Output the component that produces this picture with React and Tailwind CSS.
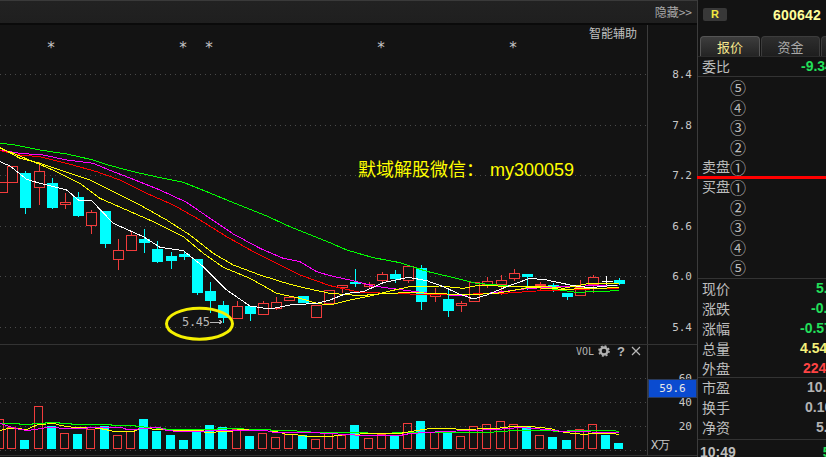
import React from "react";

const z1 = (x) => x / 3;
const z2 = (x) => 330 + x / 3;
const py = (y) => 130 + y / 3;
const vy = (y) => 340 + y / 3;

// [centerX(zoom), type, bodyTop, bodyBottom, wickTop, wickBottom]
const candlesA = [
  [5, "r", 157, 187, 157, 187], [37, "r", 108, 155, 108, 155], [76, "c", 129, 233, 123, 251], [118, "r", 124, 172, 95, 224],
  [157, "c", 159, 233, 145, 236], [196, "r", 216, 223, 190, 236], [235, "c", 202, 260, 186, 262], [274, "r", 247, 287, 240, 311],
  [316, "c", 244, 344, 244, 353], [355, "r", 361, 388, 327, 419], [394, "r", 316, 361, 307, 361], [433, "c", 327, 339, 297, 368],
  [472, "c", 357, 395, 333, 399], [514, "c", 378, 392, 365, 416], [553, "c", 372, 381, 365, 389], [592, "c", 387, 488, 387, 494],
  [631, "c", 484, 515, 457, 550], [670, "c", 526, 566, 514, 578], [712, "r", 529, 566, 514, 566], [751, "c", 529, 554, 529, 572],
  [790, "r", 520, 553, 514, 556], [829, "r", 517, 536, 502, 540], [868, "r", 502, 511, 502, 514], [910, "c", 499, 520, 499, 520],
  [949, "r", 526, 562, 526, 562], [988, "r", 480, 520, 480, 522],
];
const candlesB = [
  [37, "r", 466, 472, 466, 490], [76, "c", 457, 464, 417, 470], [118, "r", 463, 469, 457, 475], [157, "r", 433, 451, 427, 460],
  [196, "c", 432, 446, 420, 460], [235, "r", 408, 451, 408, 458], [274, "c", 414, 515, 405, 540], [316, "r", 490, 500, 475, 515],
  [355, "c", 507, 542, 480, 560], [394, "r", 520, 526, 514, 545], [433, "r", 457, 514, 457, 515], [472, "r", 454, 463, 442, 475],
  [514, "r", 451, 464, 436, 495], [553, "r", 430, 445, 418, 452], [592, "c", 432, 441, 432, 480], [631, "r", 463, 467, 457, 484],
  [670, "c", 465, 471, 460, 487], [712, "c", 489, 500, 489, 509], [751, "r", 470, 493, 451, 493], [790, "r", 442, 463, 436, 490],
  [829, "w", 452, 452, 438, 465], [868, "c", 450, 461, 445, 465],
];

const priceLines = [
  ["#00ff00", [[0,40],[40,44],[120,60],[200,72],[280,90],[320,104],[400,125],[480,143],[550,157],[620,185],[700,218],[800,258],[870,290],[950,322],[990,338]],
    [[50,360],[130,383],[210,398],[290,424],[380,445],[440,460],[500,465],[570,470],[650,475],[740,487],[866,482]]],
  ["#ff00ff", [[0,60],[60,70],[130,75],[200,90],[280,100],[340,125],[400,148],[480,180],[560,217],[630,265],[700,312],[780,355],[850,385],[900,395],[950,425],[990,437]],
    [[60,450],[130,468],[220,480],[300,490],[380,497],[440,493],[500,487],[600,475],[700,470],[866,465]]],
  ["#ff0000", [[0,62],[60,75],[120,80],[200,100],[290,125],[360,150],[440,190],[520,225],[600,270],[680,320],[760,365],[830,400],[900,435],[990,467]],
    [[90,487],[180,490],[270,493],[350,495],[430,492],[520,490],[620,483],[740,478],[866,475]]],
  ["#ffff00", [[0,52],[60,85],[120,100],[200,127],[270,150],[340,185],[420,225],[500,270],[570,315],[640,370],[700,405],[780,435],[860,460],[920,475],[990,490]],
    [[90,497],[170,490],[240,488],[320,490],[400,495],[500,490],[600,472],[700,478],[866,473]]],
  ["#ffff00", [[0,55],[40,70],[100,95],[170,125],[240,160],[300,205],[380,240],[460,275],[550,320],[610,370],[670,412],[750,445],[830,490],[900,505],[950,520],[990,525]],
    [[60,510],[120,498],[180,483],[240,470],[330,468],[400,475],[450,465],[540,470],[640,468],[700,475],[780,460],[866,460]]],
  ["#ffffff", [[0,95],[30,108],[80,148],[120,160],[200,180],[235,210],[275,212],[340,280],[430,320],[480,352],[550,362],[610,410],[680,480],[750,528],[810,537],[870,525],[950,520],[990,510]],
    [[50,490],[100,485],[160,458],[235,442],[290,452],[340,470],[390,493],[430,507],[470,495],[530,470],[600,445],[650,450],[730,467],[780,473],[860,465]]],
];

const barsA = [[-3,"r",237],[34,"r",262],[73,"c",300],[115,"r",199],[154,"c",258],[193,"r",280],[232,"c",282],[271,"r",267],[313,"c",258],[352,"r",286],[391,"r",273],[430,"c",237],[469,"c",273],[511,"c",285],[550,"c",300],[589,"c",267],[628,"c",255],[667,"c",261],[709,"r",267],[748,"c",288],[787,"r",280],[826,"r",292],[865,"r",282],[907,"c",285],[946,"r",298],[985,"r",280]];
const barsB = [[34,"r",285],[73,"c",255],[115,"r",295],[154,"r",282],[193,"c",285],[232,"r",250],[271,"c",243],[313,"r",277],[352,"c",273],[391,"r",289],[430,"r",259],[469,"r",253],[511,"r",244],[550,"r",253],[589,"c",261],[628,"r",286],[667,"c",291],[709,"c",300],[748,"r",268],[787,"r",253],[826,"c",285],[865,"c",309]];

const volLines = [
  ["#00ff00", [[0,250],[57,250],[60,253],[96,253],[99,250],[135,250],[138,247],[177,247],[178,250],[215,250],[216,253],[335,253],[336,256],[405,256],[408,259],[425,259],[440,262],[495,265],[498,268],[650,268],[655,265],[730,265],[732,268],[810,268],[812,271],[890,271],[893,274],[930,274],[932,277],[990,277]],
    [[100,277],[130,280],[240,277],[490,277],[495,274],[575,271],[650,270],[690,272],[735,270],[850,271],[866,274]]],
  ["#ffff00", [[0,271],[25,265],[50,265],[80,268],[100,258],[115,253],[165,250],[180,256],[225,262],[270,260],[300,265],[330,271],[340,274],[400,274],[420,265],[490,268],[505,271],[610,271],[615,277],[640,277],[655,274],[690,274],[720,268],[830,274],[860,283],[890,283],[900,286],[930,289],[990,289]],
    [[50,283],[130,280],[210,280],[225,275],[280,268],[305,265],[375,265],[380,268],[500,265],[545,259],[600,257],[660,265],[690,274],[730,280],[770,283],[780,280],[850,280],[866,283]]],
  ["#ff00ff", [[0,250],[20,256],[45,265],[80,270],[105,266],[140,262],[175,262],[180,265],[260,265],[265,262],[365,262],[380,268],[410,268],[420,265],[480,262],[500,270],[540,274],[610,274],[620,271],[800,271],[820,277],[930,277],[990,280]],
    [[100,284],[210,284],[240,278],[340,272],[500,268],[570,262],[650,268],[700,272],[866,277]]],
];

const RED = "#f23c3c";
const CYAN = "#00ffff";

function Candle({ x, type, t, b, wt, wb }) {
  const cx = Math.round(x) + 0.5;
  if (type === "w") {
    return (
      <g stroke="#ffffff" shapeRendering="crispEdges">
        <line x1={cx} x2={cx} y1={wt} y2={wb} />
        <line x1={cx - 5} x2={cx + 6} y1={Math.round(t) + 0.5} y2={Math.round(t) + 0.5} />
      </g>
    );
  }
  const top = Math.round(t);
  const h = Math.max(1, Math.round(b - t));
  if (type === "c") {
    return (
      <g shapeRendering="crispEdges">
        <line x1={cx} x2={cx} y1={wt} y2={wb} stroke={CYAN} />
        <rect x={cx - 5.5} y={top} width={11} height={h} fill={CYAN} />
      </g>
    );
  }
  return (
    <g shapeRendering="crispEdges" stroke={RED}>
      <line x1={cx} x2={cx} y1={wt} y2={top} />
      <line x1={cx} x2={cx} y1={top + h} y2={wb} />
      <rect x={cx - 5} y={top + 0.5} width={10} height={h} fill="#131313" />
    </g>
  );
}

const grid = (y) => (
  <line key={y} x1="0" x2="647" y1={y + 0.5} y2={y + 0.5} stroke="#4a4a4a" strokeDasharray="1 4" shapeRendering="crispEdges" />
);

const snap = (v) => Math.round(v) + 0.5;

function PriceChart() {
  const pts = (a, b) =>
    a.map(([x, y]) => `${z1(x)},${py(y)}`).concat(b.map(([x, y]) => `${z2(x)},${py(y)}`)).join(" ");
  return (
    <svg width="647" height="319" viewBox="0 25 647 319" className="block">
      {[74, 125, 175, 226, 276, 327].map(grid)}
      {candlesA.map((c, i) => (
        <Candle key={i} x={z1(c[0])} type={c[1]} t={py(c[2])} b={py(c[3])} wt={py(c[4])} wb={py(c[5])} />
      ))}
      {candlesB.map((c, i) => (
        <Candle key={i} x={z2(c[0])} type={c[1]} t={py(c[2])} b={py(c[3])} wt={py(c[4])} wb={py(c[5])} />
      ))}
      {priceLines.map(([color, a, b], i) => (
        <polyline key={i} points={pts(a, b)} fill="none" stroke={color} strokeWidth="1" shapeRendering="crispEdges" />
      ))}
      {[51, 183, 209, 381, 513].map((x) => (
        <text key={x} x={x} y="53" textAnchor="middle" fill="#c4c4c4" fontSize="15" fontFamily="'DejaVu Sans Mono', monospace">*</text>
      ))}
      <text x="589" y="38" fill="#c0c0c0" fontSize="12" fontFamily="'Noto Sans CJK SC', sans-serif">智能辅助</text>
      <text x="358" y="176" fill="#ffff00" fontSize="18" fontFamily="'Noto Sans CJK SC', sans-serif">默域解股微信：</text>
      <text x="490" y="176" fill="#ffff00" fontSize="18" fontFamily="'Liberation Sans', sans-serif">my300059</text>
      <ellipse cx="199.5" cy="323.7" rx="33" ry="15.5" fill="none" stroke="#f5f000" strokeWidth="3" />
      <text x="182" y="326" fill="#b8b8b8" fontSize="12" fontFamily="'DejaVu Sans Mono', monospace" textLength="28">5.45</text>
      <g stroke="#b8b8b8" fill="none" shapeRendering="crispEdges">
        <path d="M210 322H222M219 320L222 322L219 324" />
      </g>
    </svg>
  );
}

function VolChart() {
  const pts = (a, b) =>
    a.map(([x, y]) => `${z1(x)},${snap(vy(y))}`).concat(b.map(([x, y]) => `${z2(x)},${snap(vy(y))}`)).join(" ");
  const Bar = ({ x, type, top }) => {
    const l = Math.round(x) - 4;
    const t = Math.round(vy(top));
    const h = 449 - t;
    return type === "c" ? (
      <rect x={l} y={t} width={9} height={h} fill={CYAN} shapeRendering="crispEdges" />
    ) : (
      <rect x={l + 0.5} y={t + 0.5} width={8} height={h - 1} fill="none" stroke={RED} shapeRendering="crispEdges" />
    );
  };
  return (
    <svg width="647" height="110" viewBox="0 345 647 110" className="block">
      {[378, 402, 426, 450].map(grid)}
      {barsA.map((b, i) => <Bar key={i} x={z1(b[0])} type={b[1]} top={b[2]} />)}
      {barsB.map((b, i) => <Bar key={i} x={z2(b[0])} type={b[1]} top={b[2]} />)}
      {volLines.map(([color, a, b], i) => (
        <polyline key={i} points={pts(a, b)} fill="none" stroke={color} strokeWidth="1" shapeRendering="crispEdges" />
      ))}
      <text x="576" y="355" fill="#b0b0b0" fontSize="10" fontFamily="'DejaVu Sans Mono', monospace" textLength="18">VOL</text>
      <g transform="translate(604 351)">
        <circle r="3.5" fill="none" stroke="#b0b0b0" strokeWidth="2.4" />
        <circle r="5" fill="none" stroke="#b0b0b0" strokeWidth="1.6" strokeDasharray="2 1.93" />
      </g>
      <text x="617" y="356" fill="#b8b8b8" fontSize="13" fontWeight="700" fontFamily="'Liberation Sans', sans-serif">?</text>
      <path d="M632 347L640 355M640 347L632 355" stroke="#b8b8b8" strokeWidth="1.2" />
    </svg>
  );
}

const mono = "font-['DejaVu_Sans_Mono',monospace]";
const cjk = "font-['Noto_Sans_CJK_SC',sans-serif]";
const arial = "font-['Liberation_Sans',sans-serif]";

function Row({ label, circled, value, color, ml }) {
  return (
    <div className={`flex h-5 shrink-0 items-center whitespace-nowrap pl-1 text-[14px] leading-[18px] text-[#bdbdbd] ${cjk}`}>
      <span className="w-[28px] shrink-0 pb-[2px]">{label}</span>
      {circled && <span className="shrink-0 text-[16px]">{circled}</span>}
      {value && (
        <span className={`shrink-0 pb-[2px] text-[14px] font-bold ${arial} ${color} ${ml}`}>{value}</span>
      )}
    </div>
  );
}

export default function App() {
  return (
    <div className="flex h-[457px] w-[826px] overflow-hidden bg-[#131313]">
      <div className="flex w-[698px] shrink-0 flex-col border-r border-[#3c3c3c]">
        <div className="flex h-[25px] shrink-0 items-center justify-end border-y border-b-2 border-t-[#3a3a3a] border-b-[#0a0a0a] bg-gradient-to-b from-[#222222] to-[#1f1f1f] pr-[5px]">
          <span className={`text-[12px] text-[#a8a8a8] ${cjk}`}>隐藏&gt;&gt;</span>
        </div>
        <div className="flex h-[320px] shrink-0 border-b border-[#333333]">
          <PriceChart />
          <div className="relative flex w-[50px] shrink-0 flex-col border-l border-[#3c3c3c] pt-[42px]">
            {["8.4", "7.8", "7.2", "6.6", "6.0", "5.4"].map((t) => (
              <div key={t} className={`flex h-[50.5px] shrink-0 items-start justify-end pr-[5px] text-[11px] leading-4 text-[#c8c8c8] ${mono}`}>{t}</div>
            ))}
          </div>
        </div>
        <div className="flex h-[111px] shrink-0 border-b border-[#333333]">
          <VolChart />
          <div className={`relative w-[50px] shrink-0 border-l border-[#3c3c3c] pt-[26px] text-right text-[11px] leading-4 text-[#c8c8c8] ${mono}`}>
            <div className="h-6 pr-[5px]">60</div>
            <div className="h-6 pr-[5px]">40</div>
            <div className="h-6 pr-[5px]">20</div>
            <div className="-mt-[6px] pl-[3px] text-left text-[12px]">X万</div>
            <div className="absolute left-0 top-[34px] flex h-[19px] w-[49px] items-center justify-center border border-[#2a3a5a] bg-[#0a4bd0] text-[#e8e8e8]">59.6</div>
          </div>
        </div>
      </div>

      <div className="flex min-w-0 flex-1 flex-col">
        <div className="flex h-[36px] shrink-0 items-start justify-between pl-[5px] pr-[5px] pt-[8px]">
          <span className={`flex h-[13px] w-[24px] items-center justify-center rounded-[2px] bg-[#383838] text-[11px] font-bold text-[#f2e840] ${arial}`}>R</span>
          <span className={`text-[14px] font-bold leading-[14px] tracking-[0.2px] text-[#ffff99] ${arial}`}>600642</span>
        </div>
        <div className={`flex h-[21px] shrink-0 items-stretch gap-px border-b border-[#2a2a2a] pl-[2px] text-[13px] ${cjk}`}>
          <div className="flex w-[60px] shrink-0 items-center justify-center rounded-t-[4px] border border-b-0 border-[#555555] bg-gradient-to-b from-[#3d3d3d] to-[#242424] text-[#f5e68c]">报价</div>
          <div className="flex w-[59px] shrink-0 items-center justify-center rounded-t-[4px] border border-b-0 border-[#3c3c3c] bg-gradient-to-b from-[#2e2e2e] to-[#1e1e1e] text-[#a8a8a8]">资金</div>
          <div className="w-[10px] shrink-0 rounded-tl-[4px] border-l border-t border-[#3c3c3c] bg-gradient-to-b from-[#2e2e2e] to-[#1e1e1e]" />
        </div>
        <div className="h-[20px] shrink-0 border-b border-[#333333]">
          <Row label="委比" value="-9.34" color="text-[#22e05a]" ml="ml-[71px]" />
        </div>
        <div className="flex shrink-0 flex-col">
          <Row circled="⑤" />
          <Row circled="④" />
          <Row circled="③" />
          <Row circled="②" />
          <Row label="卖盘" circled="①" />
        </div>
        <div className="relative z-10 -mb-[2px] -ml-px -mt-px h-[3px] shrink-0 bg-[#ff0000]" />
        <div className="flex h-[102px] shrink-0 flex-col border-b border-[#333333]">
          <Row label="买盘" circled="①" />
          <Row circled="②" />
          <Row circled="③" />
          <Row circled="④" />
          <Row circled="⑤" />
        </div>
        <div className="flex h-[99px] shrink-0 flex-col border-b border-[#333333]">
          <Row label="现价" value="5.80" color="text-[#22e05a]" ml="ml-[86px]" />
          <Row label="涨跌" value="-0.03" color="text-[#22e05a]" ml="ml-[81px]" />
          <Row label="涨幅" value="-0.57%" color="text-[#22e05a]" ml="ml-[70px]" />
          <Row label="总量" value="4.54万" color="text-[#f5f07a]" ml="ml-[70px]" />
          <Row label="外盘" value="22459" color="text-[#ff4444]" ml="ml-[73px]" />
        </div>
        <div className="flex h-[62px] shrink-0 flex-col border-b border-[#333333]">
          <Row label="市盈" value="10.5" color="text-[#b4b4b4]" ml="ml-[77px]" />
          <Row label="换手" value="0.10%" color="text-[#b4b4b4]" ml="ml-[75px]" />
          <Row label="净资" value="5.12" color="text-[#b4b4b4]" ml="ml-[86px]" />
        </div>
        <div className={`flex h-[24px] shrink-0 items-center whitespace-nowrap pl-[2px] text-[14px] font-bold text-[#bdbdbd] ${arial}`}>
          <span>10:49</span>
          <span className="ml-[87px] text-[#22e05a]">5</span>
        </div>
      </div>
    </div>
  );
}
